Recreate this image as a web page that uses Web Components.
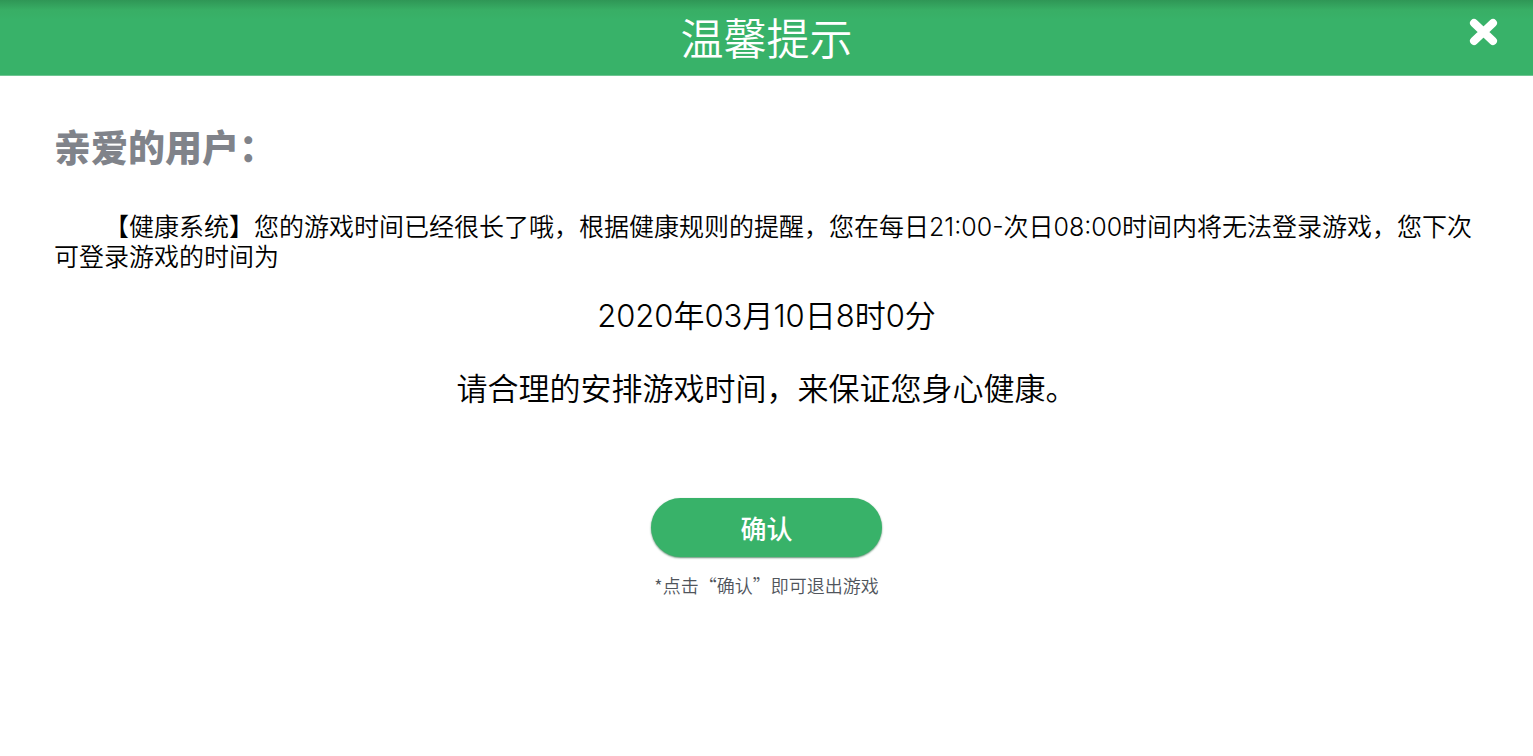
<!DOCTYPE html>
<html lang="zh-CN">
<head>
<meta charset="utf-8">
<meta name="viewport" content="width=device-width, initial-scale=1">
<title>温馨提示</title>
<style>
  html, body { margin: 0; min-height: 100%; background: #fff; }
  body { font-family: Inter, "Noto Sans CJK SC", sans-serif; color: #000; }
</style>
</head>
<body>
<notice-page>
  <notice-header slot="header">温馨提示</notice-header>
  <notice-letter>
    <span slot="greeting">亲爱的用户：</span>
    <span slot="message">【健康系统】您的游戏时间已经很长了哦，根据健康规则的提醒，您在每日21:00-次日08:00时间内将无法登录游戏，您下次可登录游戏的时间为</span>
    <time slot="time" datetime="2020-03-10T08:00">2020年03月10日8时0分</time>
    <span slot="advice">请合理的安排游戏时间，来保证您身心健康。</span>
  </notice-letter>
  <notice-confirm slot="footer">确认<span slot="hint">*点击“确认”即可退出游戏</span></notice-confirm>
</notice-page>

<script>
  const define = (name, markup) => {
    const template = document.createElement('template');
    template.innerHTML = markup;
    customElements.define(name, class extends HTMLElement {
      constructor() {
        super();
        this.attachShadow({ mode: 'open' }).append(template.content.cloneNode(true));
      }
    });
  };

  define('notice-page', `
    <style>
      :host { display: flex; flex-direction: column; min-height: 100vh; }
      main { display: flex; flex-direction: column; padding: 48px 54px; }
    </style>
    <slot name="header"></slot>
    <main><slot></slot><slot name="footer"></slot></main>`);

  define('notice-header', `
    <style>
      :host {
        display: grid; grid-template-columns: 1fr auto 1fr; box-sizing: border-box;
        height: 76px; padding: 0 34px;
        background: linear-gradient(#2f9656, #38ae65 10px, #38b269 20px);
        border-bottom: 1px solid #6fc592; color: #fff;
      }
      h1 { grid-column: 2; margin: 0; font-size: 43px; line-height: 78px; font-weight: 350; }
      close-button { justify-self: end; margin-top: 16px; }
    </style>
    <h1><slot></slot></h1>
    <close-button></close-button>`);

  define('close-button', `
    <style>
      :host { display: block; height: 32px; }
      button { display: block; padding: 0; border: 0; background: none; cursor: pointer; }
      svg { display: block; width: 32px; height: 32px; }
      path { stroke: #fff; stroke-width: 8; stroke-linecap: round; }
    </style>
    <button type="button" aria-label="关闭">
      <svg viewBox="0 0 32 32" fill="none" aria-hidden="true"><path d="M7 7 26 25M26 7 7 25"/></svg>
    </button>`);

  define('notice-letter', `
    <style>
      :host { display: block; }
      h2, p { margin: 0; }
      h2 { font-size: 37px; line-height: 50px; font-weight: 900; color: #80838a; }
      p { font-weight: 350; }
      .message { margin-top: 38px; font-size: 25px; line-height: 30px; text-indent: 2em; }
      .large { font-size: 31px; line-height: 48px; text-align: center; }
      .time { margin-top: 20px; }
      .advice { margin-top: 25px; }
    </style>
    <h2><slot name="greeting"></slot></h2>
    <p class="message"><slot name="message"></slot></p>
    <p class="large time"><slot name="time"></slot></p>
    <p class="large advice"><slot name="advice"></slot></p>`);

  define('notice-confirm', `
    <style>
      :host { display: flex; flex-direction: column; align-items: center; margin-top: 85px; }
      button {
        width: 231px; height: 59px; padding: 0; border: 0; border-radius: 30px;
        background: #38b269; box-shadow: 0 1px 2px #5f8f72; color: #fff;
        font: 500 26px/59px "Noto Sans CJK SC", sans-serif; cursor: pointer;
      }
      p { margin: 16px 0 0; color: #50555c; font: 350 18px/24px "Noto Sans CJK SC", sans-serif; }
    </style>
    <button type="button"><slot></slot></button>
    <p><slot name="hint"></slot></p>`);
</script>
</body>
</html>
